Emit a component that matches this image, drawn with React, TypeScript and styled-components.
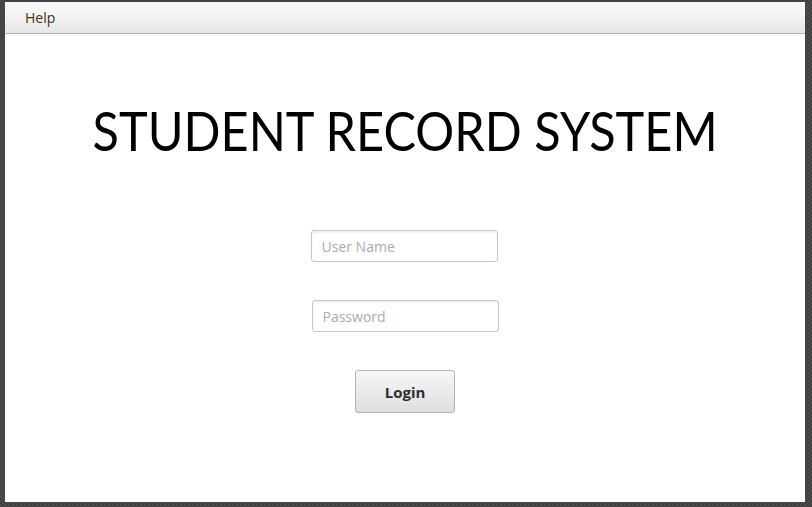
import React, { useState } from 'react';
import styled, { createGlobalStyle } from 'styled-components';

const GlobalStyle = createGlobalStyle`
  html, body {
    margin: 0;
    padding: 0;
    width: 812px;
    height: 507px;
    overflow: hidden;
  }
  body {
    font-family: "Open Sans", "Noto Sans", sans-serif;
    background-color: #4b4b4b;
    background-image:
      linear-gradient(45deg, #3f3f3f 25%, transparent 25%, transparent 75%, #3f3f3f 75%),
      linear-gradient(45deg, #3f3f3f 25%, transparent 25%, transparent 75%, #3f3f3f 75%);
    background-size: 4px 4px;
    background-position: 0 0, 2px 2px;
  }
`;

const Desktop = styled.div`
  width: 812px;
  height: 507px;
  box-sizing: border-box;
  padding: 2px 7px 5px 5px;
  display: flex;
`;

const Window = styled.div`
  flex: 1;
  display: flex;
  flex-direction: column;
  background: #ffffff;
`;

const MenuBar = styled.div`
  height: 31px;
  display: flex;
  align-items: center;
  padding-left: 20px;
  background: linear-gradient(to bottom, #fafafa 0%, #f0f0f0 60%, #e6e6e6 100%);
  border-bottom: 1px solid #b4b4b4;
`;

const MenuItem = styled.span`
  font-size: 14px;
  color: #333333;
  padding: 0 0 1px 0;
`;

const Content = styled.div`
  flex: 1;
  display: flex;
  flex-direction: column;
  align-items: center;
  padding-top: 66px;
`;

// Calibri-like narrow title: Lato squeezed horizontally
const Title = styled.h1`
  margin: 0;
  font-family: Lato, "Open Sans", sans-serif;
  font-weight: 400;
  font-size: 55px;
  line-height: 60px;
  color: #000000;
  white-space: nowrap;
  transform: scaleX(0.885);
`;

const Form = styled.form`
  margin-top: 70px;
  display: flex;
  flex-direction: column;
  align-items: center;
  gap: 38px;
`;

const Field = styled.input<{ $shift?: number }>`
  box-sizing: border-box;
  width: 187px;
  height: 32px;
  margin-left: ${p => p.$shift ?? 0}px;
  padding: 0 10px;
  font-family: "Open Sans", "Noto Sans", sans-serif;
  font-size: 14px;
  color: #333333;
  border: 1px solid #c6c6c6;
  border-radius: 3px;
  box-shadow: inset 0 2px 2px rgba(0, 0, 0, 0.06);
  outline: none;

  &::placeholder {
    color: #ababab;
  }
`;

const LoginButton = styled.button`
  box-sizing: border-box;
  width: 100px;
  height: 43px;
  font-family: "Open Sans", "Noto Sans", sans-serif;
  font-size: 15px;
  font-weight: 700;
  color: #2e2e2e;
  border: 1px solid #b3b3b3;
  border-radius: 3px;
  background: linear-gradient(to bottom, #f6f6f6 0%, #ebebeb 50%, #dedede 100%);
  cursor: pointer;
`;

export default function App() {
  const [user, setUser] = useState('');
  const [pass, setPass] = useState('');

  return (
    <>
      <GlobalStyle />
      <Desktop>
        <Window>
          <MenuBar>
            <MenuItem>Help</MenuItem>
          </MenuBar>
          <Content>
            <Title>STUDENT RECORD SYSTEM</Title>
            <Form onSubmit={e => e.preventDefault()}>
              <Field
                type="text"
                placeholder="User Name"
                $shift={-2}
                value={user}
                onChange={e => setUser(e.target.value)}
              />
              <Field
                type="password"
                placeholder="Password"
                value={pass}
                onChange={e => setPass(e.target.value)}
              />
              <LoginButton type="submit">Login</LoginButton>
            </Form>
          </Content>
        </Window>
      </Desktop>
    </>
  );
}
